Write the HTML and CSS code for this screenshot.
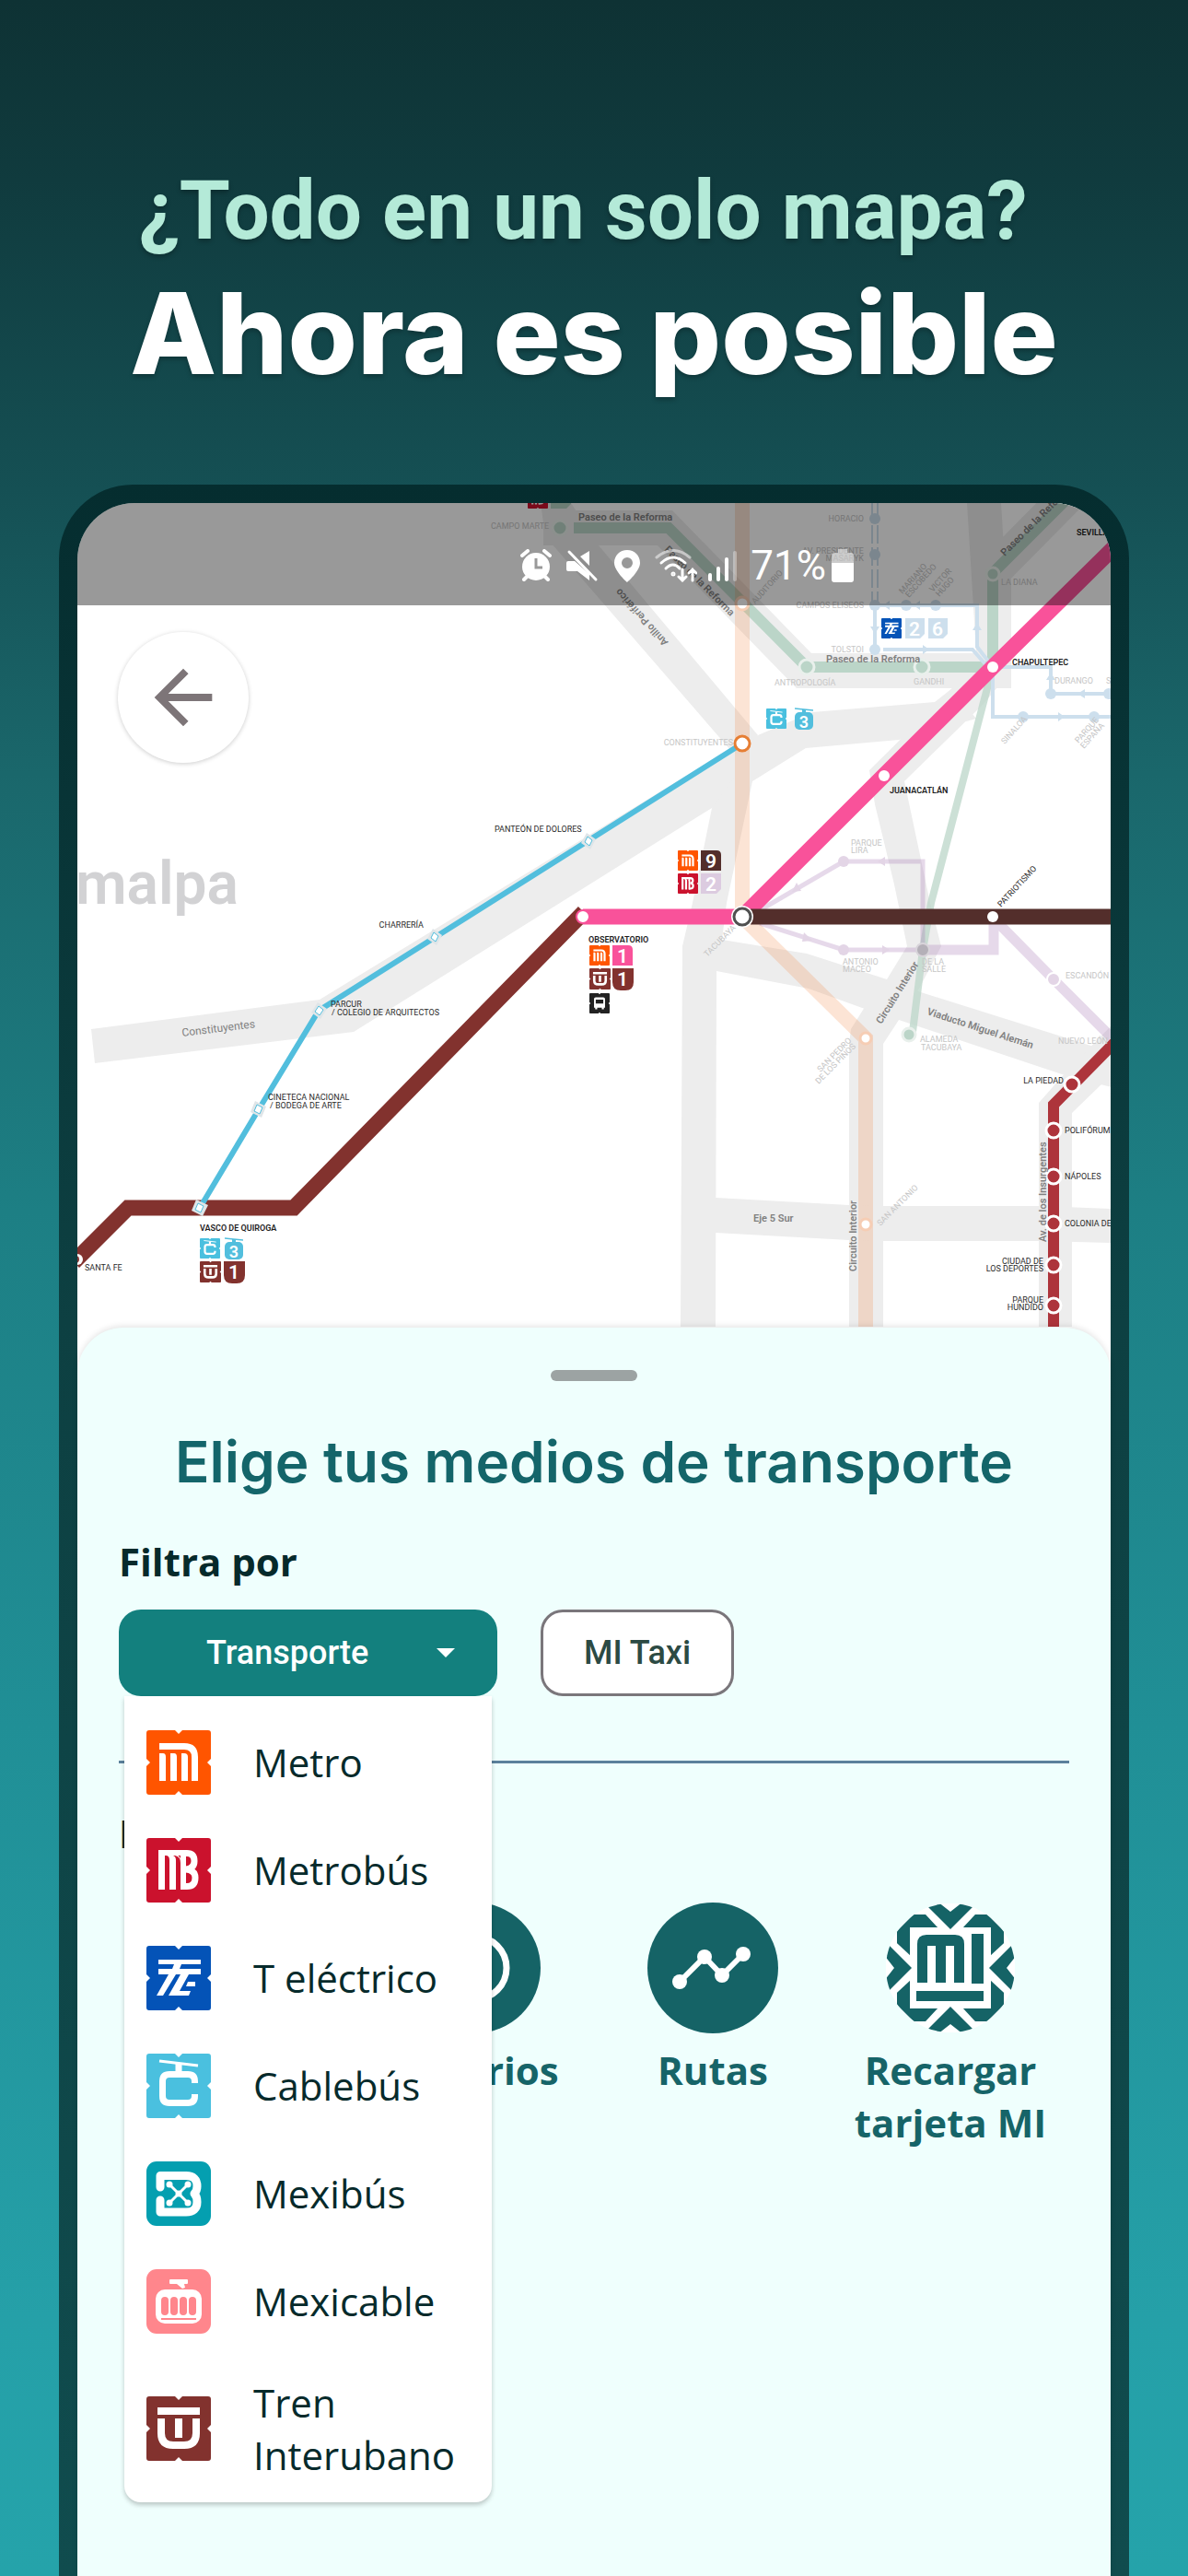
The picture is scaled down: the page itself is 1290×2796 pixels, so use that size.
FILE: index.html
```html
<!DOCTYPE html>
<html lang="es">
<head>
<meta charset="utf-8">
<meta name="viewport" content="width=device-width, initial-scale=1">
<title>Mapa de movilidad</title>
<link rel="stylesheet" href="styles.css">
</head>
<body>
<svg class="defs" aria-hidden="true">
  <symbol id="tile" viewBox="0 0 70 70">
    <path d="M3 0H31L35 4L39 0H67Q70 0 70 3V31L66 35L70 39V67Q70 70 67 70H39L35 66L31 70H3Q0 70 0 67V39L4 35L0 31V3Q0 0 3 0Z"/>
  </symbol>
  <symbol id="metro" viewBox="0 0 70 70">
    <use href="#tile" fill="#ff5500"/>
    <path fill="#fff" d="M14 14H41Q56 14 56 29V55H49V29Q49 21 41 21H14ZM14 25H18Q21 25 21 29V55H14ZM26 25H30Q33 25 33 29V55H26ZM38 25H41Q45 25 45 29V55H38Z"/>
  </symbol>
  <symbol id="metrobus" viewBox="0 0 70 70">
    <use href="#tile" fill="#cb122d"/>
    <path fill="#fff" d="M13 13H44V19H34Q37 20 37 24V19H43V56H37V27Q37 20 31 19H29Q32 20 32 24V56H25V24Q25 19 21 19H20V56H13Z"/>
    <path fill="none" stroke="#fff" stroke-width="7" d="M40 16.5H44Q52 16.5 52 25Q52 33 43 34Q53 35 53 43Q53 52.500 44 52.500H38"/>
  </symbol>
  <symbol id="electrico" viewBox="0 0 70 70">
    <use href="#tile" fill="#0453b7"/>
    <path fill="#fff" d="M13 15H59V20H38L36 25H59V31H46L36 49H48L46 54H24L37 31H32L18 54H11L24 31H13V25H28L30 20H13ZM45 39H53V44H43Z"/>
  </symbol>
  <symbol id="cablebus" viewBox="0 0 70 70">
    <use href="#tile" fill="#4ac0df"/>
    <path fill="none" stroke="#fff" stroke-width="3" d="M14 8L56 13"/>
    <path fill="none" stroke="#fff" stroke-width="7" d="M35 11V20M52.500 32V30Q52.500 22.500 45 22.500H25Q17.500 22.500 17.500 30V46Q17.500 53.500 25 53.500H45Q52.500 53.500 52.500 46V44"/>
  </symbol>
  <symbol id="mexibus" viewBox="0 0 70 70">
    <rect width="70" height="70" rx="11" fill="#049fb0"/>
    <path fill="none" stroke="#fff" stroke-width="9" stroke-linejoin="round" stroke-linecap="round" d="M15 28V15.500H43Q55 15.500 55 27Q55 32 52 35Q55 38 55 44Q55 55 43 55H15V42"/>
    <path stroke="#fff" stroke-width="3" d="M25 25L45 45M45 25L25 45"/>
    <g fill="#fff"><circle cx="25" cy="25" r="3.500"/><circle cx="45" cy="25" r="3.500"/><circle cx="25" cy="45" r="3.500"/><circle cx="45" cy="45" r="3.500"/><circle cx="35" cy="35" r="3.500"/></g>
  </symbol>
  <symbol id="mexicable" viewBox="0 0 70 70">
    <rect width="70" height="70" rx="11" fill="#ff868c"/>
    <path fill="#fff" d="M26 11H44Q45 11 45 12V15Q45 16 44 16H41L42 20L39 21L33 16H26Q25 16 25 15V12Q25 11 26 11Z"/>
    <rect x="10" y="22" width="50" height="37" rx="10" fill="#fff"/>
    <g fill="#ff868c"><rect x="16" y="30" width="8" height="20" rx="4"/><rect x="26" y="30" width="8" height="20" rx="4"/><rect x="36" y="30" width="8" height="20" rx="4"/><rect x="46" y="30" width="8" height="20" rx="4"/><rect x="16" y="53" width="38" height="2"/></g>
  </symbol>
  <symbol id="tren" viewBox="0 0 70 70">
    <use href="#tile" fill="#82322e"/>
    <path fill="#fff" d="M12 12H58V20H12ZM31 24H39V45H31Z"/>
    <path fill="none" stroke="#fff" stroke-width="8" d="M16 24V40Q16 53 29 53H41Q54 53 54 40V24"/>
  </symbol>
  <symbol id="gondola" viewBox="0 0 20 24">
    <path stroke="#52bedd" stroke-width="1.500" d="M0 1L20 3"/>
    <path stroke="#52bedd" stroke-width="4" d="M10 2V7"/>
    <rect y="5" width="20" height="19" rx="5" fill="#52bedd"/>
  </symbol>
  <symbol id="bus" viewBox="0 0 70 70">
    <use href="#tile" fill="#222"/>
    <path fill="#fff" d="M22 14H48Q54 14 54 20V50H50V56H43V50H27V56H20V50H16V20Q16 14 22 14ZM22 22V36H48V22Z"/>
  </symbol>
</svg>

<header class="hero">
  <p class="hero-lead">¿Todo en un solo mapa?</p>
  <h1 class="hero-title">Ahora es posible</h1>
</header>

<main class="phone">
  <section class="map" aria-label="Mapa">
    <svg class="map-art" viewBox="84 546 1122 954">
      <g fill="#ededed">
        <path d="M99 1117L347 1085L806 805L823 798L882 773L1015 762L1034 747L1060 780L976 803L875 812L817 848L773 877L384 1120L103 1154Z"/>
        <path d="M587 546L592 582L657 657L800 822L823 798L650 592L620 546Z"/>
        <path d="M1050 546H1087L1098 724H1061Z"/>
        <path d="M1098 728L1067 765L982 848L1010 980L1022 1027L998 1073L976 1107L959 1133V1440H922V1133L924 1117L939 1093L963 1063L985 1027L971 960L950 873L944 836L1034 747Z"/>
        <path d="M773 877L752 980L741 1027L739 1440H777L778 1054L784 1020L789 980L817 848L800 840Z"/>
        <path d="M770 1017L784 1020L876 1035L963 1063L1000 1077L1207 1142V1180L1156 1167L976 1107L939 1095L878 1073L778 1054Z"/>
        <path d="M777 1300L922 1308L959 1309H1130L1207 1312V1349L1130 1347H959L922 1346L777 1338Z"/>
        <path d="M1128 1440V1197L1158 1163L1207 1113V1170L1196 1177L1164 1208V1440Z"/>
      </g>
      <path fill="none" stroke="#ededed" stroke-width="38" d="M590 573H722L873 728H1079V620L1158 540"/>
      <g fill="none" stroke="#bbd5c8">
        <path stroke-width="12" d="M623 573H726L876 724H1078V622L1156 544"/>
        <path stroke-width="8" d="M1078 724L1011 980L1002 1031L991 1120" opacity=".75"/>
      </g>
      <g fill="#bbd5c8" stroke="#e9f0ec" stroke-width="3"><circle cx="608" cy="573" r="8"/><circle cx="876" cy="724" r="8"/><circle cx="1001" cy="724" r="8"/><circle cx="1078" cy="623" r="7"/><circle cx="987" cy="1123" r="7"/></g>
      <path fill="none" stroke="#f08240" stroke-opacity=".22" stroke-width="16" d="M806 546V995L940 1127V1440"/>
      <g fill="#fff" stroke="#f6cdb4" stroke-width="3"><circle cx="806" cy="655" r="7"/><circle cx="940" cy="1127" r="6"/><circle cx="940" cy="1329" r="6"/></g>
      <g fill="none" stroke="#cddfed" stroke-width="4">
        <path stroke-width="2" stroke-dasharray="20 4" d="M947 546V655M953 546V655"/>
        <path d="M950 657V705M950 657H1061V702L1078 724M959 705H1056L1076 728M1078 724H1141V753H1207M1078 730V778H1207"/>
      </g>
      <g fill="#cddfed"><circle cx="950" cy="563" r="6"/><circle cx="950" cy="602" r="6"/><circle cx="950" cy="657" r="6"/><circle cx="950" cy="705" r="6"/><circle cx="984" cy="657" r="6"/><circle cx="1016" cy="657" r="6"/><circle cx="1141" cy="753" r="6"/><circle cx="1204" cy="753" r="6"/><circle cx="1111" cy="778" r="6"/><circle cx="1188" cy="778" r="6"/>
        <path d="M959 657L966 652V662ZM992 657L999 652V662ZM950 688L945 680H955ZM1009 705L1002 700V710ZM1061 676L1056 684H1066ZM1141 730L1136 738H1146ZM1156 778L1149 773V783ZM1170 753L1178 748V758Z"/></g>
      <g fill="none" stroke="#a678b4" stroke-opacity=".28">
        <path stroke-width="5" d="M825 988L916 935H1002V1031M825 1002L916 1031H1002"/>
        <path stroke-width="11" d="M1008 1031H1079V1000M1082 1000L1144 1063L1207 1126"/>
      </g>
      <g fill="#e3d5e6"><circle cx="916" cy="935" r="6"/><circle cx="916" cy="1031" r="6"/><circle cx="1144" cy="1063" r="7" stroke="#fff" stroke-width="2"/>
        <path d="M953 935L961 930V940ZM860 968L870 967L865 958ZM966 1031L958 1026V1036ZM882 1021L873 1012L871 1022Z"/></g>
      <circle cx="1002" cy="1031" r="7" fill="#b4b0b8" stroke="#d8d4da" stroke-width="2"/>

      <path fill="none" stroke="#f9529a" stroke-width="17" d="M1212 592L1078 724L806 995H633"/>
      <path fill="none" stroke="#532e2b" stroke-width="17" d="M815 995H1207"/>
      <path fill="none" stroke="#82322e" stroke-width="17" d="M634 990L319 1311H139L80 1370"/>
      <path fill="none" stroke="#ad343b" stroke-width="12" d="M1210 1132L1144 1199V1440"/>
      <path fill="none" stroke="#52bedd" stroke-width="6" d="M806 807L346 1097L281 1204L217 1311"/>
      <g fill="#fff">
        <circle cx="1078" cy="724" r="6"/><circle cx="960" cy="842" r="6"/><circle cx="1078" cy="995" r="6"/>
        <circle cx="633" cy="995" r="7" stroke="#f9529a" stroke-width="2"/>
        <circle cx="806" cy="807" r="8" stroke="#e67e34" stroke-width="3"/>
        <circle cx="806" cy="995" r="12"/><circle cx="806" cy="995" r="9" stroke="#505050" stroke-width="3"/>
        <circle cx="84" cy="1367" r="6"/>
      </g>
      <circle cx="82" cy="1367" r="4" fill="#82322e"/>
      <g fill="#ad343b" stroke="#fff" stroke-width="3"><circle cx="1164" cy="1177" r="8"/><circle cx="1144" cy="1227" r="8"/><circle cx="1144" cy="1277" r="8"/><circle cx="1144" cy="1328" r="8"/><circle cx="1144" cy="1373" r="8"/><circle cx="1144" cy="1417" r="8"/></g>
      <g fill="#dfe5e8"><path d="M637 904L647 911L641 922L631 915Z"/><path d="M470 1008L480 1015L474 1026L464 1019Z"/><path d="M345 1088L355 1095L348 1106L338 1099Z"/><path d="M277 1195L289 1201L284 1213L272 1207Z"/><path d="M213 1302L226 1308L220 1320L208 1314Z"/></g>
      <g fill="#fff" stroke="#52bedd"><path d="M638 908L643 912L640 918L635 914Z"/><path d="M471 1012L476 1016L473 1022L468 1018Z"/><path d="M346 1092L351 1096L347 1102L342 1098Z"/><path d="M279 1199L285 1202L282 1209L276 1206Z"/><path d="M215 1306L221 1309L218 1316L212 1313Z"/></g>

      <text class="district" x="82" y="981">malpa</text>
      <g class="road">
        <text x="628" y="565">Paseo de la Reforma</text>
        <text transform="translate(721 597) rotate(45)">Paseo de la Reforma</text>
        <text transform="translate(726 697) rotate(228)">Anillo Periférico</text>
        <text x="897" y="719">Paseo de la Reforma</text>
        <text transform="translate(1091 604) rotate(-45)">Paseo de la Reforma</text>
        <text transform="translate(957 1112) rotate(-58)">Circuito Interior</text>
        <text transform="translate(1006 1101) rotate(18)">Viaducto Miguel Alemán</text>
        <text transform="translate(930 1380) rotate(-90)">Circuito Interior</text>
        <text transform="translate(1136 1348) rotate(-90)">Av. de los Insurgentes</text>
        <text x="818" y="1326">Eje 5 Sur</text>
        <text class="road-light" transform="translate(198 1125) rotate(-7)">Constituyentes</text>
      </g>
      <g class="stop stop-faint">
        <text x="533" y="574">CAMPO MARTE</text>
        <text transform="translate(820 656) rotate(-48)">AUDITORIO</text>
        <text class="end" x="938" y="566">HORACIO</text>
        <text class="end" x="938" y="601">AV. PRESIDENTE</text>
        <text class="end" x="938" y="609">MASARYK</text>
        <text class="end" x="938" y="660">CAMPOS ELISEOS</text>
        <text class="end" x="938" y="708">TOLSTOI</text>
        <text transform="translate(980 645) rotate(-48)">MARIANO</text>
        <text transform="translate(987 649) rotate(-48)">ESCOBEDO</text>
        <text transform="translate(1013 643) rotate(-48)">VICTOR</text>
        <text transform="translate(1020 648) rotate(-48)">HUGO</text>
        <text x="1087" y="635">LA DIANA</text>
        <text x="1145" y="742">DURANGO</text>
        <text x="1201" y="742">SONORA</text>
        <text transform="translate(1091 808) rotate(-48)">SINALOA</text>
        <text transform="translate(1171 807) rotate(-48)">PARQUE</text>
        <text transform="translate(1177 813) rotate(-48)">ESPAÑA</text>
        <text x="841" y="744">ANTROPOLOGÍA</text>
        <text x="992" y="743">GANDHI</text>
        <text class="end" x="796" y="809">CONSTITUYENTES</text>
        <text x="924" y="918">PARQUE</text>
        <text x="924" y="926">LIRA</text>
        <text transform="translate(768 1039) rotate(-45)">TACUBAYA</text>
        <text x="915" y="1047">ANTONIO</text>
        <text x="915" y="1055">MACEO</text>
        <text x="1001" y="1047">DE LA</text>
        <text x="1001" y="1055">SALLE</text>
        <text x="1157" y="1062">ESCANDÓN</text>
        <text x="999" y="1131">ALAMEDA</text>
        <text x="1000" y="1140">TACUBAYA</text>
        <text x="1149" y="1133">NUEVO LEÓN</text>
        <text transform="translate(891 1164) rotate(-45)">SAN PEDRO</text>
        <text transform="translate(889 1177) rotate(-45)">DE LOS PINOS</text>
        <text transform="translate(956 1331) rotate(-45)">SAN ANTONIO</text>
      </g>
      <g class="stop">
        <text x="537" y="903">PANTEÓN DE DOLORES</text>
        <text class="end" x="460" y="1007">CHARRERÍA</text>
        <text x="359" y="1093">PARCUR</text>
        <text x="360" y="1102">/ COLEGIO DE ARQUITECTOS</text>
        <text x="291" y="1194">CINETECA NACIONAL</text>
        <text x="293" y="1203">/ BODEGA DE ARTE</text>
        <text x="92" y="1379">SANTA FE</text>
        <text class="end" x="1155" y="1176">LA PIEDAD</text>
        <text x="1156" y="1230">POLIFÓRUM</text>
        <text x="1156" y="1280">NÁPOLES</text>
        <text x="1156" y="1331">COLONIA DEL VALLE</text>
        <text class="end" x="1133" y="1372">CIUDAD DE</text>
        <text class="end" x="1133" y="1380">LOS DEPORTES</text>
        <text class="end" x="1133" y="1414">PARQUE</text>
        <text class="end" x="1133" y="1422">HUNDIDO</text>
        <text transform="translate(1087 985) rotate(-47)">PATRIOTISMO</text>
      </g>
      <g class="stop stop-strong">
        <text x="1169" y="581">SEVILLA</text>
        <text x="1099" y="722">CHAPULTEPEC</text>
        <text x="966" y="861">JUANACATLÁN</text>
        <text x="639" y="1023">OBSERVATORIO</text>
        <text x="217" y="1336">VASCO DE QUIROGA</text>
      </g>

      <use href="#metrobus" x="573" y="530" width="22" height="22"/>
      <path fill="#b4d0c2" d="M598 530H620V547L615 552H598Z"/>
      <use href="#electrico" x="957" y="671" width="22" height="22"/>
      <path fill="#cddfed" d="M983 671H1004V688L999 693H983ZM1008 671H1029V688L1024 693H1008Z"/>
      <use href="#cablebus" x="832" y="769" width="22" height="22"/>
      <use href="#gondola" x="863" y="768" width="20" height="24"/>
      <use href="#metro" x="736" y="923" width="22" height="22"/>
      <path fill="#532e2b" d="M761 923H778Q783 923 783 928V945H761Z"/>
      <use href="#metrobus" x="736" y="948" width="22" height="22"/>
      <path fill="#dccbe0" d="M761 948H783V965L778 970H761Z"/>
      <use href="#metro" x="640" y="1026" width="22" height="22"/>
      <path fill="#f9529a" d="M665 1026H682Q687 1026 687 1031V1048H665Z"/>
      <use href="#tren" x="640" y="1051" width="23" height="23"/>
      <path fill="#82322e" d="M665 1051H688V1066Q688 1075 679 1075H674Q665 1075 665 1066Z"/>
      <use href="#bus" x="640" y="1078" width="22" height="22"/>
      <use href="#cablebus" x="217" y="1344" width="22" height="22"/>
      <use href="#gondola" x="244" y="1343" width="20" height="24"/>
      <use href="#tren" x="217" y="1369" width="23" height="23"/>
      <path fill="#82322e" d="M243 1369H266V1384Q266 1393 257 1393H252Q243 1393 243 1384Z"/>
      <g class="line-no">
        <text x="993" y="690">2</text><text x="1018" y="690">6</text>
        <text class="line-no-small" x="873" y="790">3</text><text x="772" y="942">9</text><text x="772" y="967">2</text>
        <text x="676" y="1045">1</text><text x="676" y="1070">1</text>
        <text class="line-no-small" x="254" y="1365">3</text><text x="254" y="1388">1</text>
      </g>
    </svg>

    <div class="status">
      <svg width="38" height="36" viewBox="0 0 38 36" fill="#fff"><circle cx="17" cy="19" r="15"/><path stroke="#fff" stroke-width="4" stroke-linecap="round" d="M2 7L8 2M32 7L26 2M7 30L4 33M27 30L30 33"/><path fill="none" stroke="#999" stroke-width="3" d="M17 10V20H24"/></svg>
      <svg width="38" height="36" viewBox="0 0 38 36" fill="#fff"><path d="M25 2V18L15 8ZM2 13H9L25 27V34L12 24H2Q0 24 0 22V15Q0 13 2 13Z"/><path stroke="#fff" stroke-width="3" stroke-linecap="round" d="M3 3L32 33"/></svg>
      <svg width="30" height="36" viewBox="0 0 30 36"><path fill="#fff" fill-rule="evenodd" d="M16 1C8 1 2 7 2 15C2 24 16 36 16 36S30 24 30 15C30 7 24 1 16 1ZM16 9A6 6 0 1 1 16 21A6 6 0 1 1 16 9Z"/></svg>
      <svg width="50" height="36" viewBox="0 0 50 36" fill="none" stroke="#fff" stroke-width="3" stroke-linecap="round"><path stroke-opacity=".5" d="M6 9Q24 -6 42 9"/><path d="M11 15Q24 3 37 15M16 21Q24 13 31 21"/><circle cx="24" cy="27" r="1"/><path d="M34 22V34M30 30L34 34L38 30M45 34V22M41 26L45 22L49 26"/></svg>
      <svg width="34" height="36" viewBox="0 0 34 36" fill="#fff"><rect y="26" width="4" height="9" rx="2"/><rect x="9" y="19" width="4" height="16" rx="2"/><rect x="18" y="9" width="4" height="26" rx="2"/><rect x="27" y="2" width="4" height="33" rx="2" opacity=".35"/></svg>
      <span class="battery">71%
        <svg width="24" height="36" viewBox="0 0 24 36" fill="#fff"><path opacity=".5" d="M7 0H17V4H21Q24 4 24 8V16H0V8Q0 4 3 4H7Z"/><path d="M0 15H24V33Q24 36 21 36H3Q0 36 0 33Z"/></svg>
      </span>
    </div>
    <button class="back" type="button" aria-label="Volver">
      <svg width="94" height="94" viewBox="0 0 24 24" fill="#7d7578"><path d="M20 11H7.830l5.590-5.590L12 4l-8 8 8 8 1.410-1.410L7.830 13H20z"/></svg>
    </button>
  </section>

  <section class="sheet">
    <div class="handle"></div>
    <h2 class="sheet-title">Elige tus medios de transporte</h2>
    <h3 class="label">Filtra por</h3>
    <div class="filters">
      <div class="dropdown">
        <button class="btn btn-main" type="button" aria-haspopup="true" aria-expanded="true" aria-controls="modes">Transporte
          <svg class="caret" width="20" height="10" viewBox="0 0 20 10" fill="#fff"><path d="M0 0H20L10 10Z"/></svg>
        </button>
        <ul class="menu" id="modes">
          <li><button class="menu-item" type="button"><svg class="mode"><use href="#metro"/></svg><span>Metro</span></button></li>
          <li><button class="menu-item" type="button"><svg class="mode"><use href="#metrobus"/></svg><span>Metrobús</span></button></li>
          <li><button class="menu-item" type="button"><svg class="mode"><use href="#electrico"/></svg><span>T eléctrico</span></button></li>
          <li><button class="menu-item" type="button"><svg class="mode"><use href="#cablebus"/></svg><span>Cablebús</span></button></li>
          <li><button class="menu-item" type="button"><svg class="mode"><use href="#mexibus"/></svg><span>Mexibús</span></button></li>
          <li><button class="menu-item" type="button"><svg class="mode"><use href="#mexicable"/></svg><span>Mexicable</span></button></li>
          <li><button class="menu-item" type="button"><svg class="mode"><use href="#tren"/></svg><span>Tren Interubano</span></button></li>
        </ul>
      </div>
      <button class="btn btn-line" type="button">MI Taxi</button>
    </div>
    <hr class="rule">
    <h3 class="label">Información</h3>
    <nav class="shortcuts">
      <a class="shortcut shortcut-first" href="#horarios">
        <svg width="142" height="142" viewBox="0 0 142 142"><circle cx="71" cy="71" r="71" fill="#156366"/><circle cx="71" cy="71" r="34" fill="none" stroke="#fff" stroke-width="7"/><path fill="none" stroke="#fff" stroke-width="6" d="M71 50V72L84 82"/></svg>
        Horarios
      </a>
      <a class="shortcut" href="#rutas">
        <svg width="142" height="142" viewBox="0 0 142 142"><circle cx="71" cy="71" r="71" fill="#156366"/><path fill="none" stroke="#fff" stroke-width="6" d="M35 86L62 59L81 79L104 56"/><g fill="#fff"><circle cx="35" cy="86" r="8"/><circle cx="62" cy="59" r="8"/><circle cx="81" cy="79" r="8"/><circle cx="104" cy="56" r="8"/></g></svg>
        Rutas
      </a>
      <a class="shortcut" href="#recargar">
        <svg width="142" height="142" viewBox="0 0 142 142">
          <defs>
            <clipPath id="round"><circle cx="71" cy="71" r="70"/></clipPath>
            <path id="wedge" fill="#fff" d="M32 0H110L71 42Z"/>
            <path id="chevron" fill="#156366" d="M41 -1H57L71 10L85 -1H101L71 29Z"/>
          </defs>
          <g clip-path="url(#round)">
            <rect width="142" height="142" fill="#fff"/>
            <path fill="#156366" d="M31 13H111L129 31V111L111 129H31L13 111V31Z"/>
            <use href="#wedge"/><use href="#wedge" transform="rotate(90 71 71)"/><use href="#wedge" transform="rotate(180 71 71)"/><use href="#wedge" transform="rotate(270 71 71)"/>
            <rect x="27" y="27" width="88" height="88" fill="#fff"/>
            <use href="#chevron"/><use href="#chevron" transform="rotate(90 71 71)"/><use href="#chevron" transform="rotate(180 71 71)"/><use href="#chevron" transform="rotate(270 71 71)"/>
            <path fill="#156366" d="M35 87V45Q35 35 45 35H76Q86 35 86 45V87H75V47H66V87H55V47H46V87ZM94 34H107V88H94ZM34 96H107V107H34Z"/>
          </g>
        </svg>
        Recargar tarjeta MI
      </a>
    </nav>
  </section>
</main>
</body>
</html>
```

FILE: styles.css
```css
* {
  box-sizing: border-box;
}

body {
  margin: 0;
  min-height: 100vh;
  display: flex;
  flex-direction: column;
  font-family: "Open Sans", "Noto Sans", sans-serif;
  color: #062a2b;
  background: linear-gradient(180deg, #0e3234 0%, #103b3e 7%, #155054 19%, #1a676b 30%, #1d7f84 47%, #208f96 67%, #25a0a8 90%, #25a3aa 100%);
}

h1, h2, h3, p, ul {
  margin: 0;
  padding: 0;
}

button {
  font: inherit;
  color: inherit;
  border: 0;
  cursor: pointer;
}

.defs {
  position: absolute;
  width: 0;
  height: 0;
}

.hero {
  padding: 175px 24px 94px;
  text-align: center;
  text-shadow: 0 3px 5px rgba(0, 0, 0, 0.25);
}

.hero-lead {
  padding-right: 24px;
  font: 700 89px/108px Roboto, sans-serif;
  color: #b4ead8;
  margin-bottom: 9px;
}

.hero-title {
  font: 800 122px/140px Inter, sans-serif;
  color: #fff;
}

.phone {
  flex: 1;
  display: flex;
  flex-direction: column;
  margin: 0 64px;
  padding: 20px 20px 0;
  border-radius: 80px 80px 0 0;
  background: linear-gradient(180deg, #052d2f, #0d4042 40%, #104c4e);
}

/* Map */

.map {
  position: relative;
  border-radius: 62px 62px 0 0;
  overflow: hidden;
  background: #fff;
}

.map-art {
  display: block;
  width: 100%;
}

.district {
  font: 600 64px Roboto, sans-serif;
  fill: #d2d2d4;
}

.road {
  font: 600 11px Roboto, sans-serif;
  fill: #808080;
}

.road-light {
  font-size: 12px;
  font-weight: 400;
}

.stop {
  font: 400 9px Roboto, sans-serif;
  fill: #2a2a2a;
}

.stop-faint {
  fill: #c6c6c6;
}

.stop-strong {
  font-weight: 600;
  fill: #1c1c1c;
}

.end {
  text-anchor: end;
}

.line-no {
  font: 600 21px Roboto, sans-serif;
  fill: #fff;
  text-anchor: middle;
}

.line-no-small {
  font-size: 18px;
}

.status {
  position: absolute;
  inset: 0 0 auto;
  height: 111px;
  padding: 24px 279px 0 0;
  display: flex;
  align-items: center;
  justify-content: flex-end;
  gap: 12px;
  background: rgba(0, 0, 0, 0.4);
  color: #fff;
}

.battery {
  display: flex;
  align-items: center;
  gap: 6px;
  font: 400 44px/48px Roboto, sans-serif;
}

.back {
  position: absolute;
  left: 44px;
  top: 140px;
  width: 142px;
  height: 142px;
  padding: 0;
  display: grid;
  place-items: center;
  border-radius: 50%;
  background: #fff;
  box-shadow: 0 1px 5px rgba(0, 0, 0, 0.2);
}

/* Bottom sheet */

.sheet {
  position: relative;
  flex: 1;
  margin-top: -59px;
  padding: 46px 45px 464px;
  border-radius: 50px 50px 0 0;
  background: #effffd;
  box-shadow: 0 -2px 6px rgba(0, 0, 0, 0.1);
}

.handle {
  width: 94px;
  height: 12px;
  margin: 0 auto 52px;
  border-radius: 6px;
  background: #9ca3a3;
}

.sheet-title {
  margin-bottom: 43px;
  font: 600 62px/72px Inter, sans-serif;
  text-align: center;
  color: #14656a;
}

.label {
  font-size: 42px;
  line-height: 57px;
  font-weight: 700;
}

.filters {
  display: flex;
  gap: 47px;
  margin-top: 24px;
}

.dropdown {
  position: relative;
}

.btn {
  height: 94px;
  border-radius: 24px;
  font: 500 36px/42px Roboto, sans-serif;
}

.btn-main {
  width: 411px;
  padding: 0 46px 0 95px;
  display: flex;
  align-items: center;
  justify-content: space-between;
  background: #13807e;
  color: #fff;
}

.btn-line {
  padding: 0 44px;
  border: 3px solid #7a767b;
  background: #fff;
  color: #2c4a43;
}

.menu {
  position: absolute;
  top: 100%;
  left: 6px;
  z-index: 1;
  width: 399px;
  padding: 13px 0 0;
  list-style: none;
  border-radius: 0 0 18px 18px;
  background: #fff;
  box-shadow: 0 3px 5px rgba(0, 0, 0, 0.22);
}

.menu-item {
  width: 100%;
  min-height: 117px;
  padding: 23px 24px;
  display: flex;
  align-items: center;
  gap: 46px;
  background: none;
  text-align: left;
  font-size: 42px;
  line-height: 57px;
}

.mode {
  flex: none;
  width: 70px;
  height: 70px;
}

.rule {
  height: 3px;
  margin: 70px 0 47px;
  border: 0;
  background: #5b819c;
}

.shortcuts {
  display: grid;
  grid-template-columns: repeat(4, 1fr);
  margin-top: 47px;
}

.shortcut {
  display: flex;
  flex-direction: column;
  align-items: center;
  gap: 11px;
  padding: 0 24px;
  font-size: 42px;
  line-height: 57px;
  font-weight: 700;
  text-align: center;
  text-decoration: none;
  color: #166468;
}

.shortcut-first {
  grid-column: 2;
}
```
